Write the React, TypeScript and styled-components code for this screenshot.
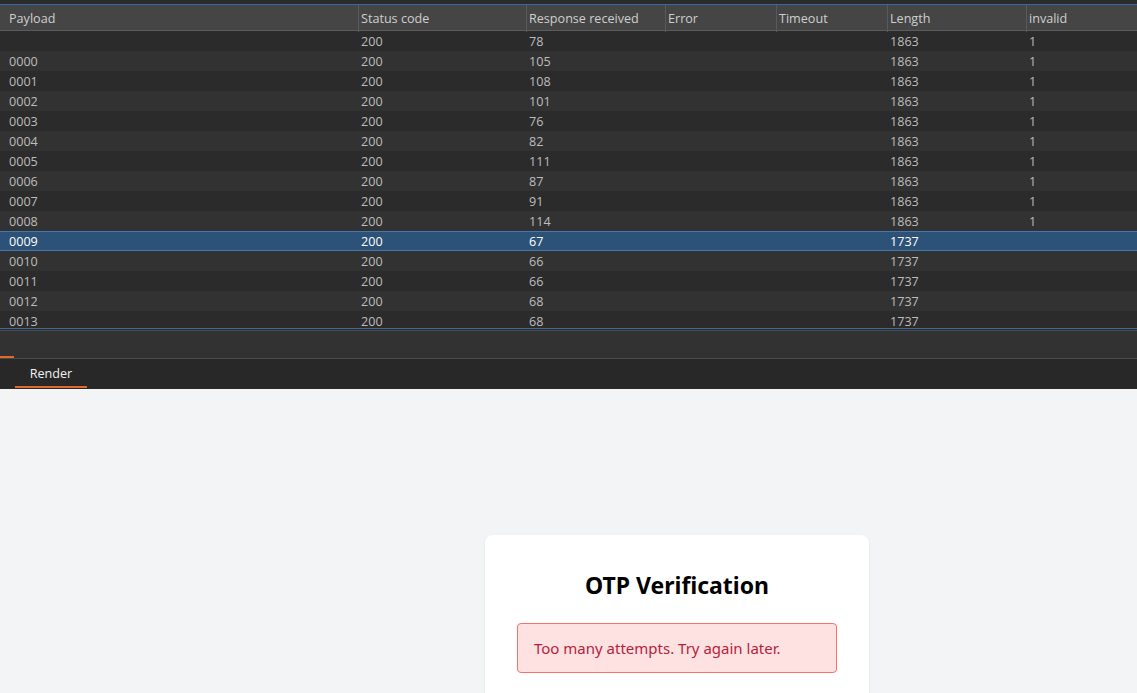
import React from "react";
import styled, { createGlobalStyle } from "styled-components";

const GlobalStyle = createGlobalStyle`
  html, body { margin: 0; padding: 0; }
  body {
    width: 1137px;
    height: 693px;
    overflow: hidden;
    background: #f3f4f6;
    font-family: "Open Sans", "Noto Sans", sans-serif;
  }
`;

const cols = [358, 168, 139, 111, 111, 139, 111];
const grid = cols.map(c => `${c}px`).join(" ");

const Page = styled.div`
  display: flex;
  flex-direction: column;
  height: 693px;
`;

const TablePane = styled.div`
  background: #2b2b2b;
  padding-top: 4px;
  height: 324px;
  overflow: hidden;
  border-bottom: 1px solid #3d6a9a;
  box-sizing: content-box;
  flex-shrink: 0;
`;

const HeaderRow = styled.div`
  display: grid;
  grid-template-columns: ${grid};
  height: 25px;
  background: #454545;
  border-top: 1px solid #2f6aa6;
  border-bottom: 1px solid #5c5c5c;
`;

const HeadCell = styled.div`
  font-size: 12.6px;
  color: #cfcfcf;
  line-height: 27px;
  padding-left: 9px;
  border-left: 1px solid #5a5a5a;
  &:first-child { border-left: none; }
  &:not(:first-child) { padding-left: 2px; }
`;

const Row = styled.div<{ $alt: boolean; $selected: boolean }>`
  display: grid;
  grid-template-columns: ${grid};
  height: 20px;
  box-sizing: border-box;
  background: ${p => (p.$selected ? "#2c5277" : p.$alt ? "#323232" : "#2b2b2b")};
  border-top: ${p => (p.$selected ? "1px solid #4377ad" : "none")};
  border-bottom: ${p => (p.$selected ? "1px solid #4377ad" : "none")};
  color: ${p => (p.$selected ? "#ffffff" : "#bdbdbd")};
`;

const Cell = styled.div<{ $selected?: boolean }>`
  font-size: 12.6px;
  line-height: ${p => (p.$selected ? "19px" : "21px")};
  padding-left: 3px;
  white-space: nowrap;
  &:first-child { padding-left: 9px; }
`;

const Gap = styled.div`
  height: 1px;
  background: #2b2b2b;
  border-bottom: 1px solid #4a4a4a;
  flex-shrink: 0;
`;

const DetailBar = styled.div`
  position: relative;
  height: 27px;
  background: #323232;
  border-bottom: 1px solid #4a4a4a;
  flex-shrink: 0;
`;

const Marker = styled.span`
  position: absolute;
  left: 0;
  bottom: 0;
  width: 14px;
  height: 2px;
  background: #e06a2e;
`;

const TabBar = styled.div`
  height: 30px;
  background: #282828;
  display: flex;
  align-items: flex-start;
  padding-left: 15px;
  flex-shrink: 0;
`;

const Tab = styled.div`
  width: 72px;
  height: 29px;
  box-sizing: border-box;
  text-align: center;
  color: #f2f2f2;
  font-size: 12.6px;
  line-height: 30px;
  border-bottom: 2px solid #e06a2e;
`;

const Render = styled.div`
  flex: 1;
  background: #f3f4f6;
  display: flex;
  justify-content: flex-start;
  padding-top: 146px;
  padding-left: 485px;
  overflow: hidden;
`;

const Card = styled.div`
  width: 384px;
  height: 200px;
  background: #ffffff;
  border-radius: 8px;
  box-shadow: 0 1px 3px rgba(0, 0, 0, 0.08);
  padding: 34px 32px 0;
  box-sizing: border-box;
`;

const Title = styled.h2`
  margin: 0 0 22px;
  text-align: center;
  font-family: "Noto Sans", "Open Sans", sans-serif;
  font-weight: 700;
  font-size: 23px;
  line-height: 32px;
  color: #000;
`;

const Alert = styled.div`
  background: #fee2e2;
  border: 1px solid #f87171;
  border-radius: 4px;
  color: #b91c3c;
  font-family: "Noto Sans", "Open Sans", sans-serif;
  font-size: 15px;
  padding: 12px 16px;
  line-height: 24px;
`;

const rows: [string, string, string, string, string][] = [
  ["", "200", "78", "1863", "1"],
  ["0000", "200", "105", "1863", "1"],
  ["0001", "200", "108", "1863", "1"],
  ["0002", "200", "101", "1863", "1"],
  ["0003", "200", "76", "1863", "1"],
  ["0004", "200", "82", "1863", "1"],
  ["0005", "200", "111", "1863", "1"],
  ["0006", "200", "87", "1863", "1"],
  ["0007", "200", "91", "1863", "1"],
  ["0008", "200", "114", "1863", "1"],
  ["0009", "200", "67", "1737", ""],
  ["0010", "200", "66", "1737", ""],
  ["0011", "200", "66", "1737", ""],
  ["0012", "200", "68", "1737", ""],
  ["0013", "200", "68", "1737", ""],
];

const headers = ["Payload", "Status code", "Response received", "Error", "Timeout", "Length", "invalid"];

export default function App() {
  return (
    <Page>
      <GlobalStyle />
      <TablePane>
        <HeaderRow>
          {headers.map(h => (
            <HeadCell key={h}>{h}</HeadCell>
          ))}
        </HeaderRow>
        {rows.map((r, i) => {
          const sel = r[0] === "0009";
          return (
            <Row key={i} $alt={i % 2 === 1} $selected={sel}>
              <Cell $selected={sel}>{r[0]}</Cell>
              <Cell $selected={sel}>{r[1]}</Cell>
              <Cell $selected={sel}>{r[2]}</Cell>
              <Cell />
              <Cell />
              <Cell $selected={sel}>{r[3]}</Cell>
              <Cell $selected={sel}>{r[4]}</Cell>
            </Row>
          );
        })}
      </TablePane>
      <Gap />
      <DetailBar>
        <Marker />
      </DetailBar>
      <TabBar>
        <Tab>Render</Tab>
      </TabBar>
      <Render>
        <Card>
          <Title>OTP Verification</Title>
          <Alert>Too many attempts. Try again later.</Alert>
        </Card>
      </Render>
    </Page>
  );
}
